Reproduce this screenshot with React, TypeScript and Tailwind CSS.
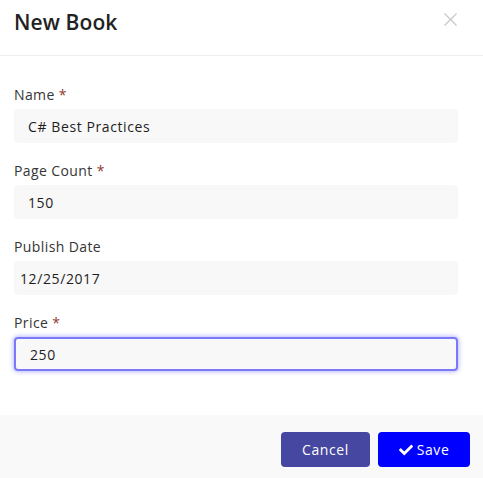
import React from "react";
import { FaCheck } from "react-icons/fa";

function Field({
  label,
  required,
  value,
  pad = "pl-[14px]",
  focused,
}: {
  label: string;
  required?: boolean;
  value: string;
  pad?: string;
  focused?: boolean;
}) {
  return (
    <div className="mb-[17px]">
      <div className="text-[14px] leading-[21px] text-[#353535] mb-[4px] tracking-[0.4px]">
        {label}
        {required && <span className="text-[#8e3a2c]"> *</span>}
      </div>
      <div
        className={
          "h-[34px] rounded-[4px] bg-[#f8f8f8] flex items-center text-[14px] text-[#1e1e1e] tracking-[0.6px] " +
          pad +
          (focused
            ? " border-2 border-[#7a7af7] shadow-[0_0_4px_1px_rgba(130,130,255,0.55)] pl-[12px]"
            : "")
        }
      >
        {value}
      </div>
    </div>
  );
}

export default function App() {
  return (
    <div
      className="w-[483px] h-[478px] bg-white flex flex-col overflow-hidden"
      style={{ fontFamily: '"Open Sans", "Noto Sans", sans-serif' }}
    >
      <div className="h-[56px] border-b border-[#eeeeee] flex items-start justify-between pl-[14px] pr-[26px] pt-[8px]">
        <div className="text-[21px] leading-[28px] font-semibold text-[#222222] tracking-[0.1px]">
          New Book
        </div>
        <svg
          width="13"
          height="13"
          viewBox="0 0 13 13"
          className="mt-[5px]"
          stroke="#c8c8c8"
          strokeWidth="1.2"
        >
          <line x1="0.5" y1="0.5" x2="12.5" y2="12.5" />
          <line x1="12.5" y1="0.5" x2="0.5" y2="12.5" />
        </svg>
      </div>
      <div className="pl-[14px] pr-[25px] pt-[28px] pb-[27px]">
        <Field label="Name" required value="C# Best Practices" />
        <Field label="Page Count" required value="150" />
        <Field label="Publish Date" value="12/25/2017" pad="pl-[6px]" />
        <Field label="Price" required value="250" focused />
      </div>
      <div className="flex-1 bg-[#f9f9f9] flex justify-end items-start gap-[8px] pr-[13px] pt-[17px]">
        <button className="w-[89px] h-[35px] rounded-[4px] bg-[#4547a0] text-white text-[14px] font-medium tracking-[0.6px]">
          Cancel
        </button>
        <button className="w-[92px] h-[35px] rounded-[4px] bg-[#0000ff] text-white text-[14px] font-medium tracking-[0.6px] flex items-center justify-center gap-[4px]">
          <FaCheck className="w-[14px] h-[14px]" />
          Save
        </button>
      </div>
    </div>
  );
}
